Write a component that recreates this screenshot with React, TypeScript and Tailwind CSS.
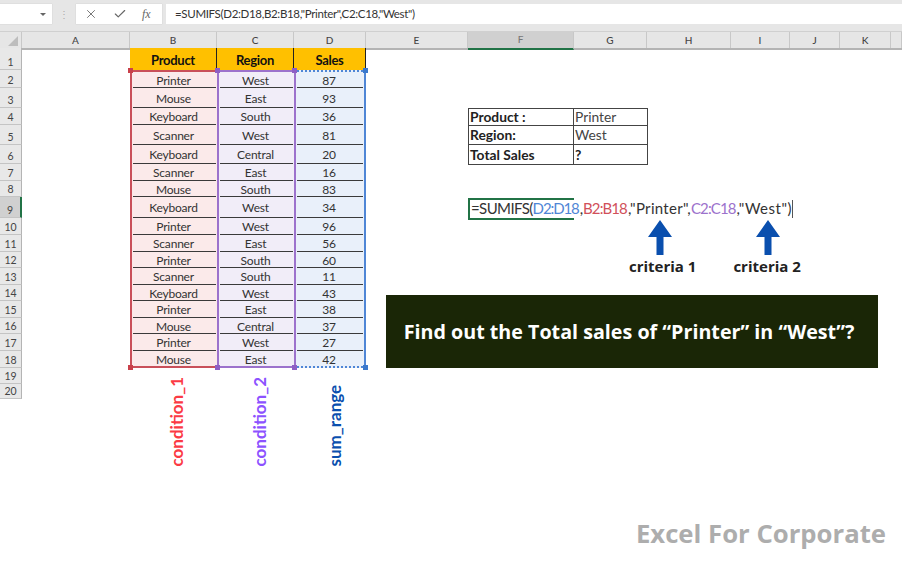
import { X, Check } from 'lucide-react';

const columns = [
  { name: 'A', width: 108 },
  { name: 'B', width: 87 },
  { name: 'C', width: 77 },
  { name: 'D', width: 72 },
  { name: 'E', width: 102 },
  { name: 'F', width: 106 },
  { name: 'G', width: 73 },
  { name: 'H', width: 84 },
  { name: 'I', width: 59 },
  { name: 'J', width: 50 },
  { name: 'K', width: 51 },
  { name: '', width: 11 },
];

const rowHeights = [22, 18, 20, 17, 20, 19, 17, 16, 21, 17, 17, 16, 17, 16, 17, 16, 17, 17, 16, 15];

const rows = [
  ['Printer', 'West', '87'],
  ['Mouse', 'East', '93'],
  ['Keyboard', 'South', '36'],
  ['Scanner', 'West', '81'],
  ['Keyboard', 'Central', '20'],
  ['Scanner', 'East', '16'],
  ['Mouse', 'South', '83'],
  ['Keyboard', 'West', '34'],
  ['Printer', 'West', '96'],
  ['Scanner', 'East', '56'],
  ['Printer', 'South', '60'],
  ['Scanner', 'South', '11'],
  ['Keyboard', 'West', '43'],
  ['Printer', 'East', '38'],
  ['Mouse', 'Central', '37'],
  ['Printer', 'West', '27'],
  ['Mouse', 'East', '42'],
];

const tableCols = [
  { title: 'Product', width: 'w-[87px]', idx: 0, tint: 'bg-[#fbeaea]', line: 'border-[#c9505a]', handle: 'bg-[#c9404a]' },
  { title: 'Region', width: 'w-[77px]', idx: 1, tint: 'bg-[#f1edf8]', line: 'border-[#9c72cc]', handle: 'bg-[#8e5fc4]' },
  { title: 'Sales', width: 'w-[72px]', idx: 2, tint: 'bg-[#e9f0fa]', line: 'border-[#9c72cc]', handle: 'bg-[#8e5fc4]' },
];

function DataColumn({ col }: { col: (typeof tableCols)[number] }) {
  const isSales = col.idx === 2;
  return (
    <div className={`${col.width} flex flex-col relative`}>
      <div className="h-[22px] pt-[3px] bg-[#ffc000] border-r border-[#222] flex items-center justify-center font-bold text-[13px] tracking-[-0.3px] text-[#111]">
        {col.title}
      </div>
      <div className={`flex flex-col border-l-2 border-b-2 border-t-2 ${col.line} ${col.tint} ${isSales ? 'border-r-2 border-r-[#4f86d6] border-t-[#4f86d6] border-b-[#4f86d6] [border-top-style:dotted] [border-bottom-style:dotted]' : ''}`}>
        {rows.map((row, i) => (
          <div
            key={i}
            style={{ height: rowHeights[i + 1] - (i === 0 ? 2 : 0) - (i === rows.length - 1 ? 2 : 0) }}
            className={`flex items-center justify-center pt-[2px] pr-[2px] text-[12px] tracking-[-0.2px] text-[#333] mx-[1px] ${i === rows.length - 1 ? '' : 'border-b-[1.5px] border-[#3a3a3a]'}`}
          >
            {row[col.idx]}
          </div>
        ))}
      </div>
      <span className={`absolute left-[-2px] top-[20px] w-[5px] h-[5px] ${col.handle}`} />
      <span className={`absolute left-[-2px] bottom-[-2px] w-[5px] h-[5px] ${col.handle}`} />
      {isSales && <span className="absolute right-[-2px] top-[20px] w-[5px] h-[5px] bg-[#3a78cc]" />}
      {isSales && <span className="absolute right-[-2px] bottom-[-2px] w-[5px] h-[5px] bg-[#3a78cc]" />}
    </div>
  );
}

function UpArrow() {
  return (
    <svg width="24" height="35" viewBox="0 0 24 35" className="block">
      <path d="M12 0 L24 17 L15.5 17 L15.5 35 L8.5 35 L8.5 17 L0 17 Z" fill="#0a4fae" />
    </svg>
  );
}

export default function App() {
  return (
    <div className="w-[902px] h-[564px] bg-white overflow-hidden flex flex-col font-['Lato',sans-serif]">
      {/* formula bar */}
      <div className="h-[32px] bg-[#e6e6e6] flex items-start pt-[4px] shrink-0 border-b border-[#d0d0d0]">
        <div className="w-[52px] h-[20px] bg-white flex items-center justify-end pr-[6px] shadow-[0_0_1px_#bbb]">
          <span className="w-0 h-0 border-x-[3px] border-x-transparent border-t-[3px] border-t-[#666]" />
        </div>
        <div className="w-[24px] h-[20px] flex items-center justify-center text-[#aaa] text-[10px] tracking-tight">⋮</div>
        <div className="w-[86px] h-[20px] bg-white flex items-center pl-[8px] gap-[15px] text-[#666] shadow-[0_0_1px_#bbb]">
          <X size={14} strokeWidth={1.5} />
          <Check size={14} strokeWidth={2} />
          <span className="font-['Liberation_Serif',serif] italic text-[12px] leading-none">fx</span>
        </div>
        <div className="ml-[4px] flex-1 h-[20px] bg-white flex items-center pl-[9px] text-[11.5px] tracking-[-0.33px] text-[#333]">
          =SUMIFS(D2:D18,B2:B18,"Printer",C2:C18,"West")
        </div>
      </div>

      {/* column headers */}
      <div className="h-[16px] bg-[#e6e6e6] flex shrink-0 border-b-2 border-[#b4b4b4] box-content">
        <div className="w-[22px] relative border-r border-[#c8c8c8]">
          <span className="absolute right-[3px] bottom-[2px] w-0 h-0 border-l-[10px] border-l-transparent border-b-[10px] border-b-[#bdbdbd]" />
        </div>
        {columns.map((c) => (
          <div
            key={c.name + c.width}
            style={{ width: c.width }}
            className={`flex items-center justify-center text-[10px] font-medium border-r border-[#c8c8c8] ${c.name === 'F' ? 'bg-[#d0d0d0] text-[#777] border-b-2 border-b-[#217346] h-[18px] pb-[2px]' : 'text-[#444]'}`}
          >
            {c.name}
          </div>
        ))}
      </div>

      {/* sheet */}
      <div className="flex flex-1 min-h-0 -mt-[2px]">
        <div className="w-[22px] flex flex-col shrink-0 self-start">
          {rowHeights.map((h, i) => (
            <div
              key={i}
              style={{ height: h }}
              className={`flex items-end justify-center pb-[1px] text-[10.5px] leading-[12px] text-[#444] border-b border-[#c4c4c4] ${i === 8 ? 'bg-[#d0d0d0] border-r-2 border-r-[#217346]' : 'bg-[#e8e8e8] border-r border-r-[#b4b4b4]'}`}
            >
              {i + 1}
            </div>
          ))}
        </div>

        <div className="w-[108px] shrink-0" />

        <div className="w-[236px] shrink-0 flex flex-col">
          <div className="flex">
            {tableCols.map((c) => (
              <DataColumn key={c.title} col={c} />
            ))}
          </div>
          <div className="flex mt-[9px] font-bold text-[17px] leading-none">
            <div className="w-[87px] flex justify-center pl-[5px]">
              <span className="[writing-mode:vertical-rl] rotate-180 text-[#fb3a44]">condition_1</span>
            </div>
            <div className="w-[77px] flex justify-center pl-[8px]">
              <span className="[writing-mode:vertical-rl] rotate-180 text-[#8c52ff]">condition_2</span>
            </div>
            <div className="w-[72px] flex justify-center pl-[8px]">
              <span className="[writing-mode:vertical-rl] rotate-180 text-[#0a4fae] mt-[5px]">sum_range</span>
            </div>
          </div>
        </div>

        <div className="flex-1 flex flex-col pt-[60px] pl-[20px]">
          {/* lookup box */}
          <div className="ml-[82px] w-[180px] border-[1.5px] border-[#444] text-[13.8px] text-[#222] leading-none">
            {[
              { label: 'Product :', value: 'Printer', bold: false, h: 'h-[17px]' },
              { label: 'Region:', value: 'West', bold: false, h: 'h-[19px]' },
              { label: 'Total Sales', value: '?', bold: true, h: 'h-[19px]' },
            ].map((r, i) => (
              <div key={i} className={`flex ${r.h} items-center ${i < 2 ? 'border-b-[1.5px] border-[#444]' : ''}`}>
                <div className="w-[105px] h-full flex items-center pl-[1px] font-bold border-r-[1.5px] border-[#444]">{r.label}</div>
                <div className={`pl-[1px] ${r.bold ? 'font-bold' : 'text-[#444]'}`}>{r.value}</div>
              </div>
            ))}
          </div>

          {/* formula cell */}
          <div className="ml-[82px] mt-[33px] relative h-[21px] flex items-center whitespace-nowrap text-[15px] text-[#333] leading-none">
            <span className="absolute left-0 top-0 w-[106px] h-[22px] border-2 border-r-0 border-[#217346]" />
            <span className="pl-[3px] tracking-[-0.6px]">=SUMIFS(</span>
            <span className="text-[#4f86d6] tracking-[-1.1px]">D2:D18</span>
            <span className="pl-[1px]">,</span>
            <span className="text-[#d1505a] tracking-[-0.9px]">B2:B18</span>
            <span className="tracking-[0.3px] pl-[1px]">,"Printer",</span>
            <span className="text-[#9c72cc] tracking-[-0.9px]">C2:C18</span>
            <span className="tracking-[0.5px] pl-[1px]">,"West")</span>
            <span className="w-px h-[18px] bg-[#555]" />
          </div>

          {/* arrows */}
          <div className="flex mt-[1px] ml-[262px]">
            <UpArrow />
            <div className="ml-[84px]"><UpArrow /></div>
          </div>
          <div className="flex ml-[243px] mt-[1px] font-bold text-[15px] text-[#222] leading-[20px] font-['Open_Sans',sans-serif]">
            <span>criteria 1</span>
            <span className="ml-[37px]">criteria 2</span>
          </div>

          {/* question banner */}
          <div className="mt-[19px] w-[492px] h-[73px] bg-[#1a2606] flex items-center justify-center pr-[6px] text-white font-bold text-[19.7px] font-['Open_Sans',sans-serif]">
            Find out the Total sales of “Printer” in “West”?
          </div>

          {/* watermark */}
          <div className="mt-[153px] w-[500px] text-right font-bold text-[25.7px] leading-none text-[#adadad] font-['Open_Sans',sans-serif]">
            Excel For Corporate
          </div>
        </div>
      </div>
    </div>
  );
}
